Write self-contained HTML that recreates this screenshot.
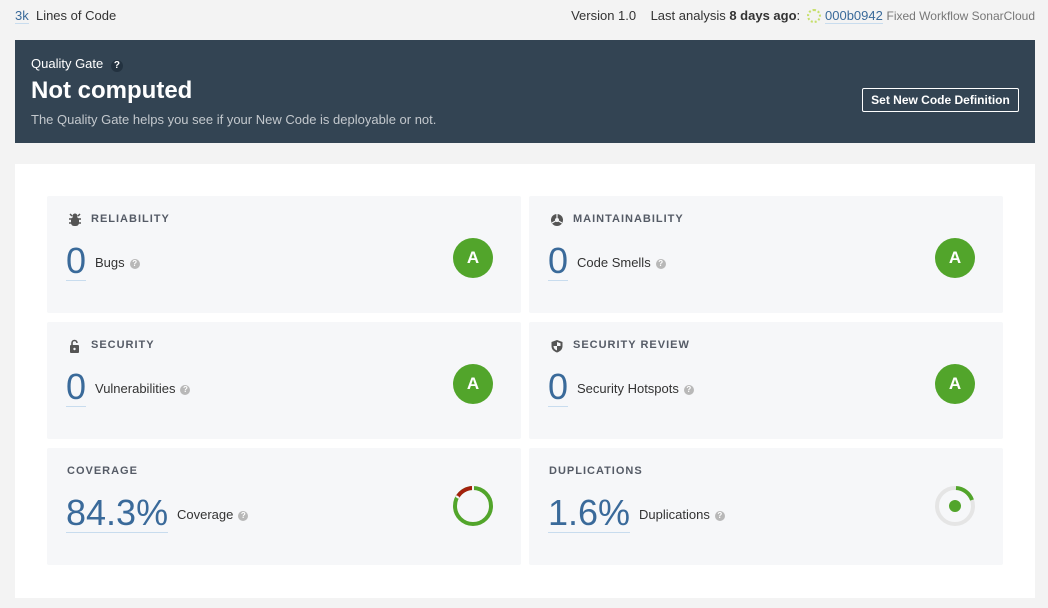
<!DOCTYPE html>
<html><head><style>
body{margin:0;width:1048px;height:608px;background:#f3f3f3;font-family:"Liberation Sans",sans-serif;color:#333;position:relative;overflow:hidden}
.a{position:absolute}
.top{font-size:13px;top:8px}
.dark{left:15px;top:40px;width:1020px;height:103px;background:#334453;color:#fff}
.white{left:15px;top:164px;width:1020px;height:434px;background:#fff}
.card{position:absolute;width:474px;height:117px;background:#f6f7f9;border-radius:2px}
.t{position:absolute;top:17px;left:44px;font-size:11px;font-weight:bold;letter-spacing:1px;color:#555b66}
.ic{position:absolute;left:21px;top:17px}
.num{position:absolute;left:19px;top:46px;font-size:36px;color:#3a6a9a;border-bottom:1px solid #c8dcee;line-height:38px;padding-bottom:0px}
.lab{position:absolute;top:59px;font-size:13px;color:#333}
.q{display:inline-block;width:10px;height:10px;border-radius:50%;background:#b8b8b8;color:#fff;font-size:8px;line-height:10px;text-align:center;font-weight:bold;vertical-align:middle;margin-left:5px}
.g{position:absolute;left:406px;top:42px;width:40px;height:40px;border-radius:50%;background:#52a52b;color:#fff;font-weight:bold;font-size:17px;text-align:center;line-height:40px}
</style></head><body>
<div class="a top" style="left:15px"><span style="color:#3a6a9a;border-bottom:1px solid #c8dcee">3k</span>&nbsp; Lines of Code</div>
<div class="a top" style="right:13px">Version 1.0 &nbsp;&nbsp; Last analysis <b>8 days ago</b>: &nbsp;<span style="display:inline-block;width:14px;height:14px;border-radius:50%;border:2px dotted #c6df6b;vertical-align:-3px;box-sizing:border-box"></span> <span style="color:#3a6a9a;border-bottom:1px solid #c8dcee">000b0942</span> <span style="font-size:12px;color:#777">Fixed Workflow SonarCloud</span></div>
<div class="a dark">
<div class="a" style="left:16px;top:16px;font-size:13px">Quality Gate <span style="display:inline-block;width:12px;height:12px;border-radius:50%;background:#233240;font-size:10px;text-align:center;line-height:12px;font-weight:bold;margin-left:4px">?</span></div>
<div class="a" style="left:16px;top:37px;font-size:24px;font-weight:bold">Not computed</div>
<div class="a" style="left:16px;top:72px;font-size:13px;color:#c3c8cd">The Quality Gate helps you see if your New Code is deployable or not.</div>
<div class="a" style="left:847px;top:48px;width:155px;height:22px;border:1px solid #fff;border-radius:2px;font-size:12px;font-weight:bold;text-align:center;line-height:22px">Set New Code Definition</div>
</div>
<div class="a white"></div>

<div class="card" style="left:47px;top:196px"><svg class="ic" width="14" height="14" viewBox="0 0 14 14"><rect x="3" y="4" width="8" height="9" rx="3" fill="#555"/><circle cx="7" cy="3" r="2.5" fill="#555"/><path d="M1 6h12M1 10h12M2 1l2 2M12 1l-2 2" stroke="#555" stroke-width="1.5"/></svg><div class="t">RELIABILITY</div><div class="num">0</div><div class="lab" style="left:48px">Bugs<span class="q">?</span></div><div class="g">A</div></div>
<div class="card" style="left:529px;top:196px"><svg class="ic" width="14" height="14" viewBox="0 0 14 14"><circle cx="7" cy="7" r="6" fill="#555"/><circle cx="7" cy="7" r="2" fill="#f6f7f9"/><path d="M7 1v4M2 10l3.5-2M12 10l-3.5-2" stroke="#f6f7f9" stroke-width="1.2"/></svg><div class="t">MAINTAINABILITY</div><div class="num">0</div><div class="lab" style="left:48px">Code Smells<span class="q">?</span></div><div class="g">A</div></div>
<div class="card" style="left:47px;top:322px"><svg class="ic" width="14" height="14" viewBox="0 0 14 14"><rect x="2" y="6" width="9" height="8" rx="1" fill="#555"/><path d="M4 6V4a2.5 2.5 0 0 1 5 0" stroke="#555" stroke-width="1.6" fill="none"/><circle cx="6.5" cy="10" r="1.2" fill="#f6f7f9"/></svg><div class="t">SECURITY</div><div class="num">0</div><div class="lab" style="left:48px">Vulnerabilities<span class="q">?</span></div><div class="g">A</div></div>
<div class="card" style="left:529px;top:322px"><svg class="ic" width="14" height="14" viewBox="0 0 14 14"><path d="M7 1l5.5 2v4c0 3.5-2.5 5.5-5.5 6.5C4 12.5 1.5 10.5 1.5 7V3z" fill="#555"/><path d="M7 3l3.5 1.3V7H7zM7 7v4.5C5 10.7 3.5 9.3 3.5 7H7z" fill="#f6f7f9"/></svg><div class="t">SECURITY REVIEW</div><div class="num">0</div><div class="lab" style="left:48px">Security Hotspots<span class="q">?</span></div><div class="g">A</div></div>
<div class="card" style="left:47px;top:448px"><div class="t" style="left:20px">COVERAGE</div><div class="num">84.3%</div><div class="lab" style="left:130px">Coverage<span class="q">?</span></div>
<svg class="a" style="left:405px;top:37px" width="42" height="42" viewBox="0 0 42 42"><circle cx="21" cy="21" r="18" fill="none" stroke="#52a52b" stroke-width="4"/><path d="M21 3A18 18 0 0 0 5.5 12" fill="none" stroke="#a4200d" stroke-width="4"/><path d="M21 1v5M4 11l3 2" stroke="#f6f7f9" stroke-width="2"/></svg></div>
<div class="card" style="left:529px;top:448px"><div class="t" style="left:20px">DUPLICATIONS</div><div class="num">1.6%</div><div class="lab" style="left:110px">Duplications<span class="q">?</span></div>
<svg class="a" style="left:405px;top:37px" width="42" height="42" viewBox="0 0 42 42"><circle cx="21" cy="21" r="18" fill="none" stroke="#e5e5e5" stroke-width="4"/><path d="M22 3A18 18 0 0 1 38 15" fill="none" stroke="#52a52b" stroke-width="4"/><circle cx="21" cy="21" r="6" fill="#52a52b"/></svg></div>
</body></html>
